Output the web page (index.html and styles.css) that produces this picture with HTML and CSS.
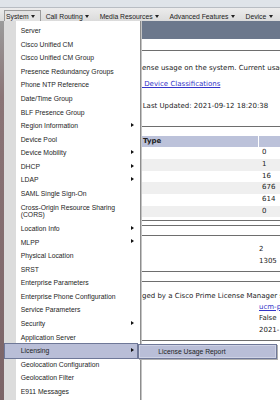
FILE: index.html
```html
<!DOCTYPE html>
<html>
<head>
<meta charset="utf-8">
<link rel="stylesheet" href="styles.css">
</head>
<body>
<div class="screen">
  <div class="topband"></div>
  <nav class="menubar">
    <div class="mb-item active">System<span class="caret"></span></div>
    <div class="mb-item">Call Routing<span class="caret"></span></div>
    <div class="mb-item">Media Resources<span class="caret"></span></div>
    <div class="mb-item">Advanced Features<span class="caret"></span></div>
    <div class="mb-item">Device<span class="caret"></span></div>
  </nav>
  <div class="page">
    <div class="strip"></div>
    <div class="main">
      <div class="bluebar"></div>
      <div class="columns">
        <div class="underlay"></div>
        <div class="content">
          <div class="rule r-frame"></div>
          <p class="line intro">ense usage on the system. Current usage</p>
          <p class="line linkline"><a class="link">&nbsp;Device Classifications</a></p>
          <p class="line updated">Last Updated: 2021-09-12 18:20:38</p>
          <div class="rule r1"></div>
          <div class="table t1">
            <div class="row head"><span class="c1">Type</span><span class="c2"></span></div>
            <div class="row"><span class="c1"></span><span class="c2">0</span></div>
            <div class="row alt"><span class="c1"></span><span class="c2">1</span></div>
            <div class="row"><span class="c1"></span><span class="c2">16</span></div>
            <div class="row alt"><span class="c1"></span><span class="c2">676</span></div>
            <div class="row"><span class="c1"></span><span class="c2">614</span></div>
            <div class="row alt"><span class="c1"></span><span class="c2">0</span></div>
          </div>
          <div class="rule double"></div>
          <div class="rule r3"></div>
          <div class="table t2 tight">
            <div class="row"><span class="c1"></span><span class="c2">2</span></div>
            <div class="row"><span class="c1"></span><span class="c2">1305</span></div>
          </div>
          <div class="rule double wide"></div>
          <p class="line note">ged by a Cisco Prime License Manager se</p>
          <div class="table t3 tight">
            <div class="row"><span class="c1"></span><span class="c2"><a class="link">ucm-p</a></span></div>
            <div class="row"><span class="c1"></span><span class="c2">False</span></div>
            <div class="row"><span class="c1"></span><span class="c2">2021-</span></div>
          </div>
          <div class="rule r5"></div>
        </div>
      </div>
    </div>
  </div>

  <ul class="dropdown">
    <li class="mi">Server</li>
    <li class="mi">Cisco Unified CM</li>
    <li class="mi">Cisco Unified CM Group</li>
    <li class="mi">Presence Redundancy Groups</li>
    <li class="mi">Phone NTP Reference</li>
    <li class="mi">Date/Time Group</li>
    <li class="mi">BLF Presence Group</li>
    <li class="mi sub">Region Information</li>
    <li class="mi">Device Pool</li>
    <li class="mi sub">Device Mobility</li>
    <li class="mi sub">DHCP</li>
    <li class="mi sub">LDAP</li>
    <li class="mi">SAML Single Sign-On</li>
    <li class="mi">Cross-Origin Resource Sharing<br>(CORS)</li>
    <li class="mi sub">Location Info</li>
    <li class="mi sub">MLPP</li>
    <li class="mi">Physical Location</li>
    <li class="mi">SRST</li>
    <li class="mi">Enterprise Parameters</li>
    <li class="mi">Enterprise Phone Configuration</li>
    <li class="mi">Service Parameters</li>
    <li class="mi sub">Security</li>
    <li class="mi">Application Server</li>
    <li class="mi sub active">Licensing
      <div class="submenu">License Usage Report</div>
    </li>
    <li class="mi">Geolocation Configuration</li>
    <li class="mi">Geolocation Filter</li>
    <li class="mi">E911 Messages</li>
  </ul>
</div>
</body>
</html>
```

FILE: styles.css
```css
* { box-sizing: border-box; margin: 0; padding: 0; }
html, body { width: 280px; height: 400px; overflow: hidden; background: #fff; }
body { font-family: "Liberation Sans", Arial, sans-serif; }

.screen { position: relative; width: 280px; height: 400px; overflow: hidden; }

.topband { height: 8px; background: #dfe4e9; border-bottom: 1px solid #b8bdc3; }

.menubar {
  height: 13px;
  display: flex;
  padding-left: 4px;
  background: linear-gradient(#ececec, #dbdbdb);
  font-size: 6.8px;
  color: #1b1b1b;
  white-space: nowrap;
}
.mb-item {
  display: flex;
  align-items: center;
  gap: 2.8px;
  margin-top: 2px;
  margin-right: 2.7px;
  padding: 0 4.5px 0 1px;
  border: 1px solid transparent;
  border-bottom: 0;
}
.mb-item.active { border-color: #9b9b9b; background: #e3e3e3; }
.caret {
  width: 0; height: 0;
  border-left: 2.5px solid transparent;
  border-right: 2.5px solid transparent;
  border-top: 3px solid #222;
}

.page { display: flex; height: 379px; }
.strip { width: 4px; flex: none; background: linear-gradient(#9b9b9b, #8a7476 20%, #7b6467); }
.main { flex: 1; min-width: 0; }
.bluebar { height: 18px; background: #6c788c; }
.columns { display: flex; }
.underlay { width: 138px; flex: none; }
.content {
  flex: 1;
  min-width: 0;
  overflow: hidden;
  font-family: "DejaVu Sans", Verdana, sans-serif;
  font-size: 7px;
  color: #222;
}

.rule { border-top: 1px solid #6e6e6e; }
.r-frame { margin-top: 11px; }
.line { height: 10px; line-height: 10px; white-space: nowrap; }
.intro { margin-top: 12.3px; }
.linkline { margin-top: 5.7px; }
.updated { margin-top: 11.7px; padding-left: 0.7px; }
.link { color: #3434c8; text-decoration: underline; }
.r1 { margin-top: 15.5px; }

.table { display: flex; flex-direction: column; }
.t1 { margin-top: 8.8px; }
.row { display: flex; height: 11.65px; line-height: 11.65px; white-space: nowrap; }
.row.head { height: 11.5px; line-height: 11.5px; font-weight: bold; }
.head .c1, .head .c2 { background: #bcc2da; }
.head .c2 { border-left: 1px solid #fff; }
.row.alt { background: #efefef; }
.c1 { width: 116px; flex: none; padding-left: 1px; }
.c2 { flex: 1; padding-left: 4px; }
.tight .c2 { padding-left: 1px; }

.double { margin-top: 3.1px; height: 5.7px; border-bottom: 1px solid #6e6e6e; }
.r3 { margin-top: 9.3px; }
.t2 { margin-top: 7.7px; }
.t2 .row { height: 11.7px; line-height: 11.7px; }
.double.wide { margin-top: 3.6px; height: 11px; }
.note { margin-top: 8.8px; }
.t3 { margin-top: 0.9px; }
.t3 .row { height: 11.6px; line-height: 11.6px; }
.r5 { margin-top: 3.5px; }

.dropdown {
  position: absolute;
  left: 4px;
  top: 21px;
  width: 137px;
  height: 400px;
  padding-top: 3.2px;
  list-style: none;
  background: linear-gradient(to right, #dcdcdc 12px, #fff 12px);
  border-right: 1px solid #8d8d8d;
  box-shadow: 1px 0 0 #c4c4c4;
  font-size: 6.8px;
  color: #1e1e1e;
}
.mi {
  position: relative;
  padding: 2.9px 0 2.9px 16.7px;
  line-height: 7.8px;
  white-space: nowrap;
}
.mi.sub::after {
  content: "";
  position: absolute;
  right: 5.8px;
  top: 50%;
  margin-top: -3px;
  border-left: 3px solid #111;
  border-top: 2.5px solid transparent;
  border-bottom: 2.5px solid transparent;
}
.mi.active {
  margin: 0 3px 0 1px;
  padding-left: 15.7px;
  background: #b9bed7;
  box-shadow: 0 0 0 1px #6f7898;
}
.mi.active::after { right: 2.8px; }

.submenu {
  position: absolute;
  left: 133.3px;
  top: 0;
  width: 139px;
  height: 15px;
  padding-left: 19px;
  line-height: 13px;
  background: #b9bed7;
  border: 1px solid #6f7898;
  box-shadow: inset 0 0 0 1px #cfd3e5, 1px 1px 0 #b0b0b0;
  color: #1e1e1e;
}
```
